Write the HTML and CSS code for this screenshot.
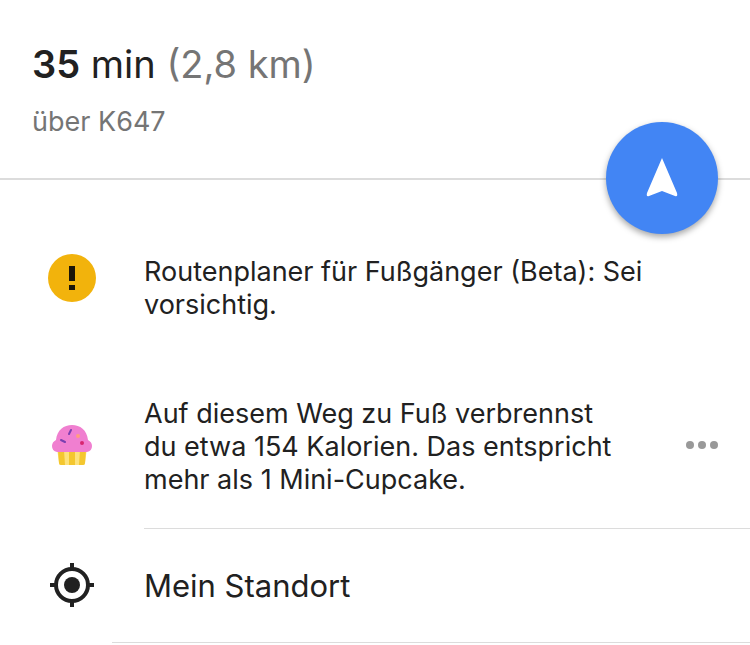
FILE: index.html
```html
<!DOCTYPE html>
<html lang="de">
<head>
    <meta charset="utf-8">
    <meta name="viewport" content="width=device-width, initial-scale=1">
    <title>Route</title>
    <link rel="stylesheet" href="styles.css">
</head>
<body>
    <header class="summary">
        <h1><strong>35</strong> min <span class="distance">(2,8 km)</span></h1>
        <p class="via">über K647</p>
        <button class="start" type="button" aria-label="Navigation starten">
            <svg width="32" height="40" viewBox="0 0 32 40">
                <path d="M16 0 L31 35 Q32 39 29 38 L16 33 L3 38 Q0 39 1 35 Z" fill="#fff"/>
            </svg>
        </button>
    </header>

    <main>
        <section class="row warning">
            <svg class="icon" width="48" height="48" viewBox="0 0 48 48">
                <circle cx="24" cy="24" r="24" fill="#f2b30c"/>
                <path d="M21 12h6v15h-6zM21 31h6v5h-6z" fill="#1c1508"/>
            </svg>
            <p>Routenplaner für Fußgänger (Beta): Sei vorsichtig.</p>
        </section>

        <section class="row calories">
            <svg class="icon" width="48" height="48" viewBox="0 2 48 48">
                <path d="M9 28h30l-2 15q0 2-2 2H13q-2 0-2-2z" fill="#fde27c"/>
                <path d="M10 30h6l1 15h-4q-2 0-2-2zM21 30h6v15h-6zM32 30h6l-1 13q0 2-2 2h-4z" fill="#f4c72f"/>
                <path d="M9 32q-5-1-5-6 0-4 4-6C9 10 16 5 24 5s15 5 16 15q4 2 4 6 0 5-5 6z" fill="#f07fd0"/>
                <path d="M21 14l2-4M13 20l4 2" stroke="#7a3fb0" stroke-width="2" stroke-linecap="round"/>
                <circle cx="30" cy="16" r="2" fill="#ff9d80"/>
                <circle cx="34" cy="23" r="2" fill="#d7266f"/>
            </svg>
            <p>Auf diesem Weg zu Fuß verbrennst du etwa 154 Kalorien. Das entspricht mehr als 1 Mini-Cupcake.</p>
            <button class="more" type="button" aria-label="Mehr">
                <svg width="32" height="10" viewBox="0 0 32 10" fill="#999">
                    <circle cx="4" cy="4" r="4"/>
                    <circle cx="16" cy="4" r="4"/>
                    <circle cx="28" cy="4" r="4"/>
                </svg>
            </button>
        </section>

        <hr class="divider text-divider">

        <section class="row location">
            <svg class="icon" width="48" height="48" viewBox="0 1 48 48">
                <circle cx="24" cy="24" r="16" fill="none" stroke="#212121" stroke-width="4"/>
                <circle cx="24" cy="24" r="8" fill="#212121"/>
                <path d="M24 2v6M24 40v6M2 24h6M40 24h6" stroke="#212121" stroke-width="4"/>
            </svg>
            <p>Mein Standort</p>
        </section>

        <hr class="divider">
    </main>
</body>
</html>
```
FILE: styles.css
```css
* {
    box-sizing: border-box;
}

body {
    margin: 0;
    background: #fff;
    color: #212121;
    font-family: Inter, "Liberation Sans", sans-serif;
    font-size: 27px;
    line-height: 33px;
}

h1, p {
    margin: 0;
}

button {
    border: none;
    padding: 0;
    cursor: pointer;
}

svg {
    display: block;
}

.summary {
    position: relative;
    padding: 40px 32px;
    border-bottom: 2px solid #dcdcdc;
}

.summary h1 {
    font-size: 38px;
    font-weight: 400;
    line-height: 48px;
}

.summary strong {
    font-weight: 600;
}

.distance {
    color: #757575;
}

.via {
    margin-top: 17px;
    color: #757575;
}

/* sits on the line below the summary */
.start {
    position: absolute;
    right: 32px;
    bottom: -56px;
    display: flex;
    align-items: center;
    justify-content: center;
    width: 112px;
    height: 112px;
    border-radius: 50%;
    background: #4285f4;
    box-shadow: 0 3px 6px rgba(0, 0, 0, 0.35);
}

.row {
    display: flex;
    align-items: center;
    padding: 32px 32px 32px 48px;
}

.row p {
    flex: 1;
    padding-top: 1px;
}

.icon {
    flex: none;
    margin-right: 48px;
}

.warning {
    align-items: flex-start;
    padding: 74px 80px 37px 48px;
}

.calories {
    padding-top: 38px;
}

.more {
    margin-left: 56px;
    background: none;
}

.location {
    font-size: 31px;
    line-height: 48px;
}

.divider {
    height: 1px;
    margin: 0 0 0 112px;
    border: none;
    background: #dcdcdc;
}

/* starts at the text column */
.text-divider {
    margin-left: 144px;
}
```
